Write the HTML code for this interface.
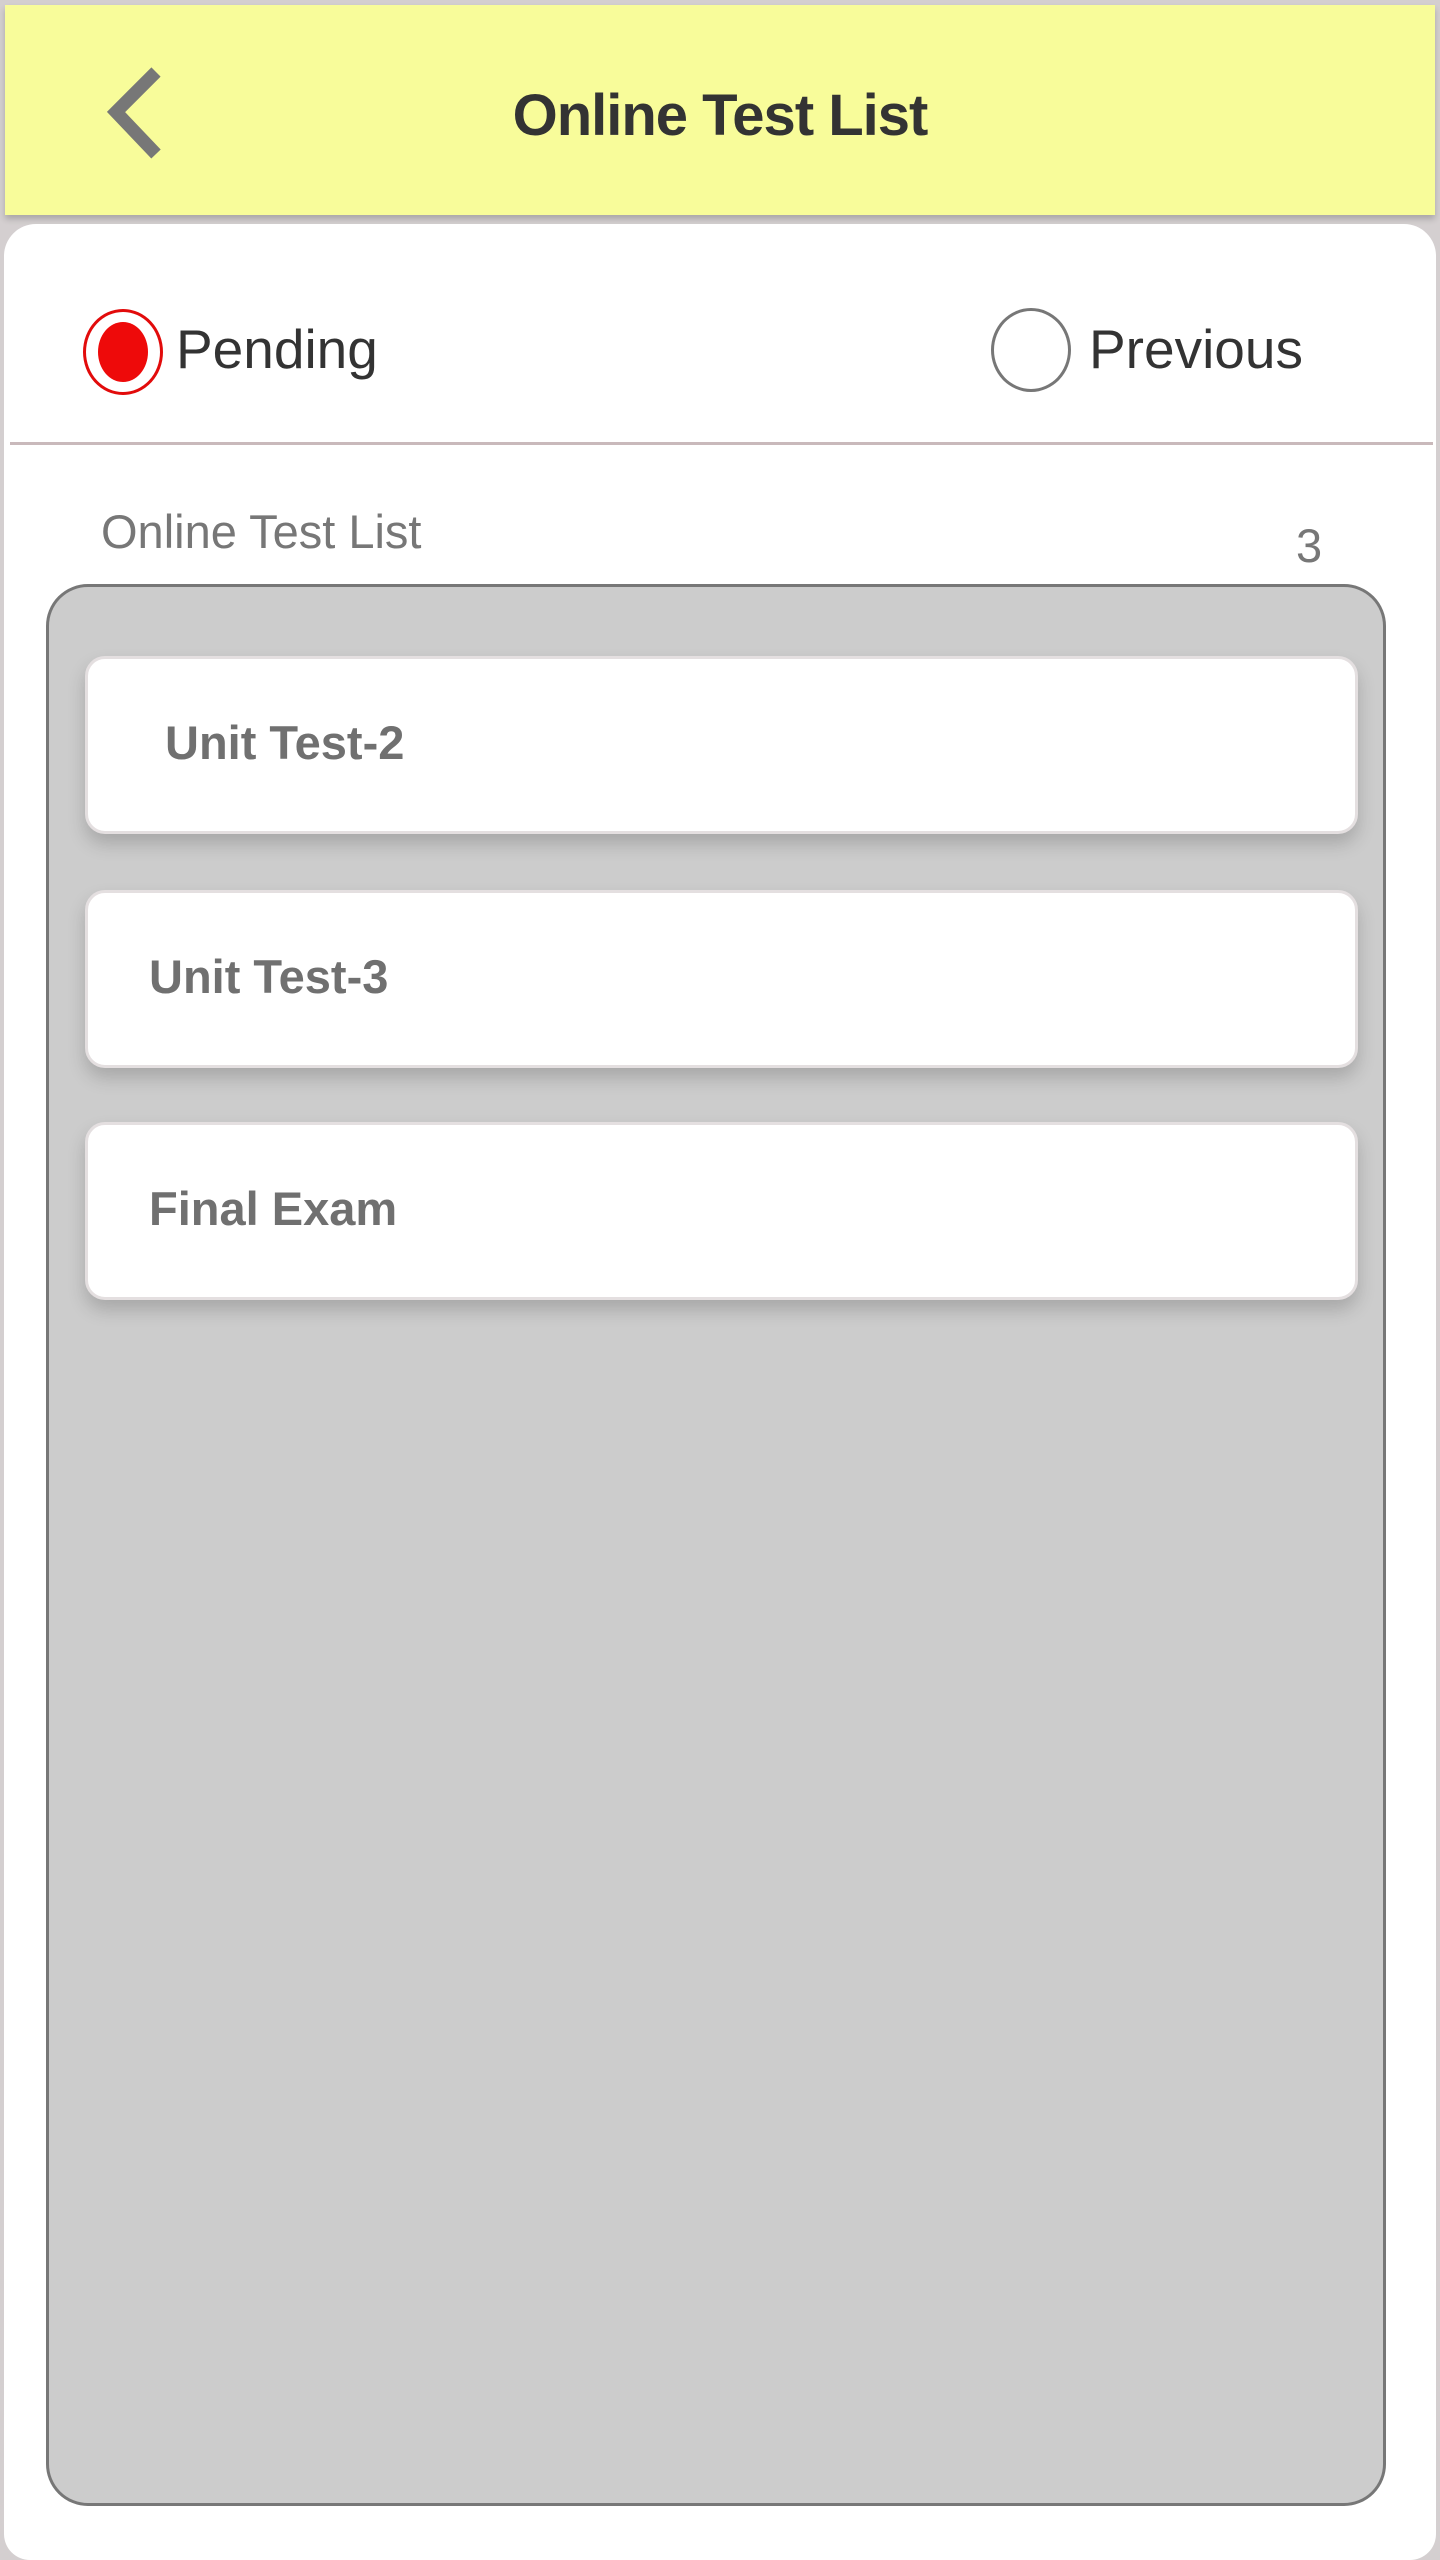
<!DOCTYPE html>
<html><head><meta charset="utf-8"><style>
html,body{margin:0;padding:0}
body{width:1440px;height:2560px;background:#d4cfd0;position:relative;overflow:hidden;font-family:"Liberation Sans",sans-serif}
.hdr{position:absolute;left:5px;top:5px;width:1430px;height:210px;background:#f8fc9a;box-shadow:0 4px 6px rgba(0,0,0,.2)}
.title{position:absolute;left:0;width:1440px;top:82px;text-align:center;font-weight:bold;font-size:58px;color:#333;letter-spacing:-1px}
.card{position:absolute;left:4px;top:224px;width:1432px;height:2336px;background:#fff;border-radius:32px 32px 26px 26px}
.radio{position:absolute;border-radius:50%;box-sizing:border-box}
.lbl{position:absolute;font-size:55px;color:#333;line-height:1}
.div{position:absolute;left:10px;top:442px;width:1423px;height:3px;background:#c9b9bb}
.box{position:absolute;left:46px;top:584px;width:1340px;height:1922px;background:#ccc;border:3px solid #777;border-radius:42px;box-sizing:border-box}
.item{position:absolute;left:85px;width:1273px;height:178px;background:#fff;border:3px solid #e4dfe0;border-radius:20px;box-sizing:border-box;box-shadow:0 10px 18px rgba(0,0,0,.18)}
.item span{position:absolute;top:60px;font-weight:bold;font-size:47px;color:#707070;line-height:1}
</style></head><body>
<div class="hdr"></div>
<svg style="position:absolute;left:100px;top:66px" width="70" height="94"><polyline points="56,6 16,46 56,88" fill="none" stroke="#777" stroke-width="13"/></svg>
<div class="title">Online Test List</div>
<div class="card">
</div>
<div class="radio" style="left:83px;top:309px;width:80px;height:86px;border:3px solid #e20b0b"></div>
<div class="radio" style="left:98px;top:322px;width:50px;height:60px;background:#ee0a0a"></div>
<div class="lbl" style="left:176px;top:322px">Pending</div>
<div class="radio" style="left:991px;top:308px;width:80px;height:84px;border:3px solid #777"></div>
<div class="lbl" style="left:1089px;top:322px">Previous</div>
<div class="div"></div>
<div class="lbl" style="left:101px;top:508px;font-size:47px;color:#777">Online Test List</div>
<div class="lbl" style="left:1296px;top:522px;font-size:47px;color:#777">3</div>
<div class="box"></div>
<div class="item" style="top:656px"><span style="left:77px">Unit Test-2</span></div>
<div class="item" style="top:890px"><span style="left:61px">Unit Test-3</span></div>
<div class="item" style="top:1122px"><span style="left:61px">Final Exam</span></div>
</body></html>
